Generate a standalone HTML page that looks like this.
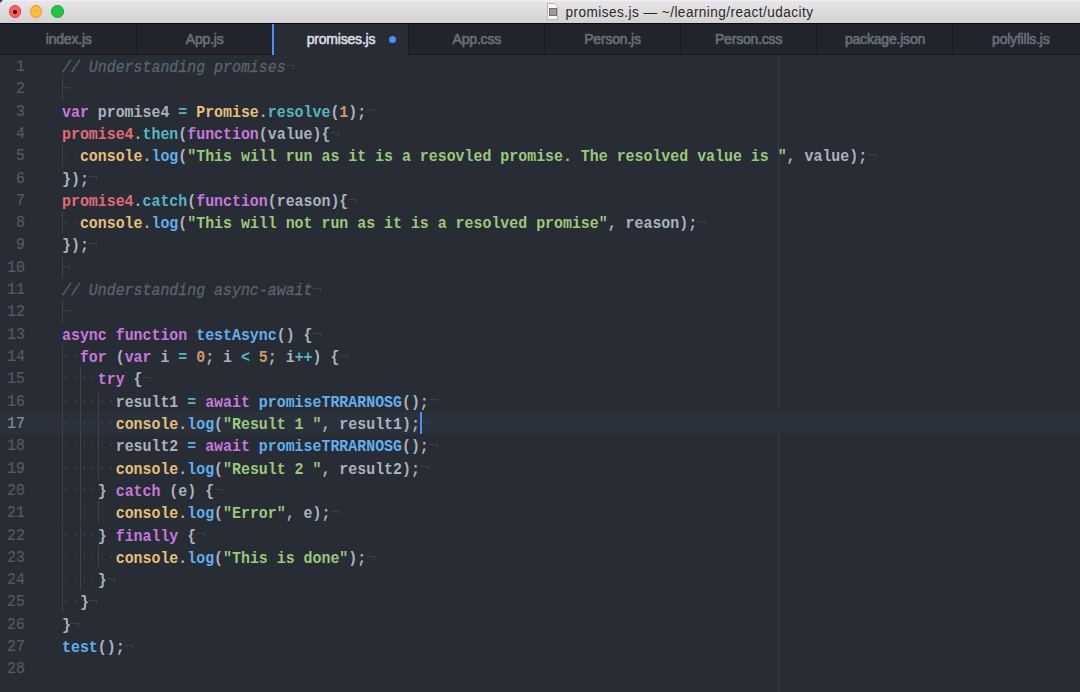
<!DOCTYPE html>
<html><head><meta charset="utf-8">
<style>
html,body{margin:0;padding:0;}
body{width:1080px;height:692px;overflow:hidden;background:#282c34;position:relative;font-family:"Liberation Sans",sans-serif;}
#title{position:absolute;left:0;top:0;width:1080px;height:23px;background:linear-gradient(#f3f1f3 0px,#e7e5e7 1.5px,#d3d1d3 23px);border-bottom:1px solid #0b0c0e;}
.tl{position:absolute;width:12.5px;height:12.5px;border-radius:50%;box-sizing:border-box;}
#ttext{position:absolute;left:565.6px;top:5.0px;font-size:13.6px;letter-spacing:0.45px;transform:scaleY(1.13);transform-origin:0 12px;color:#2a2a2a;white-space:nowrap;}
#tabs{position:absolute;left:0;top:24px;width:1080px;height:31px;background:#21252b;}
.sep{position:absolute;top:0;width:1px;height:30px;background:#181a1f;}
.tbot{position:absolute;top:30px;height:1px;background:#181a1f;}
.act{position:absolute;left:272px;top:0;width:136px;height:31px;background:#282c34;border-left:2px solid #528bff;box-sizing:border-box;}
.tt{position:absolute;top:7.0px;transform:translateX(-50%);font-size:14px;letter-spacing:-0.2px;line-height:16px;color:#686e7a;white-space:nowrap;-webkit-text-stroke:0.6px currentColor;}
.tt.a{color:#d7dae0;}
.ln{position:absolute;left:0;width:25px;text-align:right;font-family:"Liberation Mono",monospace;font-size:14.92px;line-height:22.31px;height:22.31px;color:#535965;transform:translateY(1.2px) scaleY(1.12);transform-origin:0 14px;-webkit-text-stroke:0.2px currentColor;white-space:pre;}
.code{position:absolute;font-family:"Liberation Mono",monospace;font-size:14.92px;line-height:22.31px;height:22.31px;color:#abb2bf;transform:translateY(1.6px) scaleY(1.12);transform-origin:0 14px;font-weight:bold;white-space:pre;}
.hl{position:absolute;left:0;width:1080px;height:22.31px;background:#2b313b;}
.ig{position:absolute;width:1px;height:22.31px;background:#3d424b;}
.dot{position:absolute;width:2px;height:2px;background:#373c45;}
.k{color:#c678dd} .v{color:#abb2bf} .o{color:#56b6c2} .y{color:#e5c07b} .c{color:#56b6c2} .b{color:#61afef} .n{color:#d19a66} .r{color:#e06c75} .s{color:#9cc87b} .cm{color:#5c6370;font-style:italic;font-weight:normal;-webkit-text-stroke:0.25px currentColor} .ln.cur{color:#858b96}
.eol{position:absolute;width:7px;height:3px;border-top:1.6px solid #3a3f48;border-right:1.6px solid #3a3f48;}
#cursor{position:absolute;left:420px;width:2px;background:#528bff;}
</style></head><body>
<div id="title">
<div style="position:absolute;left:0;top:0;width:0;height:0;border-top:3px solid #34404a;border-right:3px solid transparent"></div>
<div class="tl" style="left:8.7px;top:5.4px;background:#fc605c;border:1px solid #d8443f"><div style="position:absolute;left:3.2px;top:3.2px;width:4.6px;height:4.6px;border-radius:50%;background:#3c0403"></div></div>
<div class="tl" style="left:29.8px;top:5.4px;background:#fdbb40;border:1px solid #dd9e32"></div>
<div class="tl" style="left:51.0px;top:5.4px;background:#20c543;border:1px solid #17a834"></div>
<svg style="position:absolute;left:546px;top:3px" width="13" height="17" viewBox="0 0 13 17">
<path d="M1.5 0.5 H8.5 L11.5 3.5 V16.5 H1.5 Z" fill="#f7f7f7" stroke="#b5b5b5" stroke-width="1"/>
<rect x="3.5" y="5.5" width="7" height="7" fill="#9a9a9a" stroke="#6f6f6f" stroke-width="1"/>
</svg>
<div id="ttext">promises.js — ~/learning/react/udacity</div>
</div>
<div id="tabs">
<div class="sep" style="left:136px"></div>
<div class="sep" style="left:408px"></div>
<div class="sep" style="left:544px"></div>
<div class="sep" style="left:680px"></div>
<div class="sep" style="left:816px"></div>
<div class="sep" style="left:952px"></div>
<div class="tbot" style="left:0;width:272px"></div>
<div class="tbot" style="left:408px;width:672px"></div>
<div class="act"></div>
<div class="tt" style="left:68.7px">index.js</div>
<div class="tt" style="left:204.7px">App.js</div>
<div class="tt a" style="left:341px">promises.js</div>
<div style="position:absolute;left:389px;top:11.5px;width:7px;height:7px;border-radius:50%;background:#528bff"></div>
<div class="tt" style="left:476.8px">App.css</div>
<div class="tt" style="left:612.5px">Person.js</div>
<div class="tt" style="left:748.6px">Person.css</div>
<div class="tt" style="left:885px">package.json</div>
<div class="tt" style="left:1020.8px">polyfills.js</div>
</div>
<div style="position:absolute;left:778px;top:55px;width:1px;height:637px;background:#363b44"></div>
<div class="ln" style="top:55.00px">1</div>
<div class="code" style="top:55.00px;left:62.0px"><span class="cm">// Understanding promises</span></div>
<div class="eol" style="top:64.80px;left:286.2px"></div>
<div class="ig" style="top:77.31px;left:62.0px"></div>
<div class="ln" style="top:77.31px">2</div>
<div class="code" style="top:77.31px;left:62.0px"></div>
<div class="eol" style="top:87.11px;left:62.4px"></div>
<div class="ln" style="top:99.62px">3</div>
<div class="code" style="top:99.62px;left:62.0px"><span class="k">var</span><span class="v"> promise4 </span><span class="o">=</span><span class="v"> </span><span class="y">Promise</span><span class="v">.</span><span class="c">resolve</span><span class="v">(</span><span class="n">1</span><span class="v">);</span></div>
<div class="eol" style="top:109.42px;left:366.8px"></div>
<div class="ln" style="top:121.93px">4</div>
<div class="code" style="top:121.93px;left:62.0px"><span class="r">promise4</span><span class="v">.</span><span class="c">then</span><span class="v">(</span><span class="k">function</span><span class="v">(value){</span></div>
<div class="eol" style="top:131.73px;left:331.0px"></div>
<div class="ig" style="top:144.24px;left:62.0px"></div>
<div class="dot" style="top:154.24px;left:65.3px"></div>
<div class="dot" style="top:154.24px;left:74.3px"></div>
<div class="ln" style="top:144.24px">5</div>
<div class="code" style="top:144.24px;left:79.9px"><span class="y">console</span><span class="v">.</span><span class="b">log</span><span class="v">(</span><span class="s">&quot;This will run as it is a resovled promise. The resolved value is &quot;</span><span class="v">, value);</span></div>
<div class="eol" style="top:154.04px;left:868.3px"></div>
<div class="ln" style="top:166.55px">6</div>
<div class="code" style="top:166.55px;left:62.0px"><span class="v">});</span></div>
<div class="eol" style="top:176.35px;left:89.3px"></div>
<div class="ln" style="top:188.86px">7</div>
<div class="code" style="top:188.86px;left:62.0px"><span class="r">promise4</span><span class="v">.</span><span class="c">catch</span><span class="v">(</span><span class="k">function</span><span class="v">(reason){</span></div>
<div class="eol" style="top:198.66px;left:348.9px"></div>
<div class="ig" style="top:211.17px;left:62.0px"></div>
<div class="dot" style="top:221.17px;left:65.3px"></div>
<div class="dot" style="top:221.17px;left:74.3px"></div>
<div class="ln" style="top:211.17px">8</div>
<div class="code" style="top:211.17px;left:79.9px"><span class="y">console</span><span class="v">.</span><span class="b">log</span><span class="v">(</span><span class="s">&quot;This will not run as it is a resolved promise&quot;</span><span class="v">, reason);</span></div>
<div class="eol" style="top:220.97px;left:698.1px"></div>
<div class="ln" style="top:233.48px">9</div>
<div class="code" style="top:233.48px;left:62.0px"><span class="v">});</span></div>
<div class="eol" style="top:243.28px;left:89.3px"></div>
<div class="ig" style="top:255.79px;left:62.0px"></div>
<div class="ln" style="top:255.79px">10</div>
<div class="code" style="top:255.79px;left:62.0px"></div>
<div class="eol" style="top:265.59px;left:62.4px"></div>
<div class="ln" style="top:278.10px">11</div>
<div class="code" style="top:278.10px;left:62.0px"><span class="cm">// Understanding async-await</span></div>
<div class="eol" style="top:287.90px;left:313.1px"></div>
<div class="ig" style="top:300.41px;left:62.0px"></div>
<div class="ln" style="top:300.41px">12</div>
<div class="code" style="top:300.41px;left:62.0px"></div>
<div class="eol" style="top:310.21px;left:62.4px"></div>
<div class="ln" style="top:322.72px">13</div>
<div class="code" style="top:322.72px;left:62.0px"><span class="k">async</span><span class="v"> </span><span class="k">function</span><span class="v"> </span><span class="b">testAsync</span><span class="v">() {</span></div>
<div class="eol" style="top:332.52px;left:313.1px"></div>
<div class="ig" style="top:345.03px;left:62.0px"></div>
<div class="dot" style="top:355.03px;left:65.3px"></div>
<div class="dot" style="top:355.03px;left:74.3px"></div>
<div class="ln" style="top:345.03px">14</div>
<div class="code" style="top:345.03px;left:79.9px"><span class="k">for</span><span class="v"> (</span><span class="k">var</span><span class="v"> i </span><span class="o">=</span><span class="v"> </span><span class="n">0</span><span class="v">; i </span><span class="o">&lt;</span><span class="v"> </span><span class="n">5</span><span class="v">; i</span><span class="o">++</span><span class="v">) {</span></div>
<div class="eol" style="top:354.83px;left:340.0px"></div>
<div class="ig" style="top:367.34px;left:62.0px"></div>
<div class="ig" style="top:367.34px;left:79.9px"></div>
<div class="dot" style="top:377.34px;left:65.3px"></div>
<div class="dot" style="top:377.34px;left:74.3px"></div>
<div class="dot" style="top:377.34px;left:83.2px"></div>
<div class="dot" style="top:377.34px;left:92.2px"></div>
<div class="ln" style="top:367.34px">15</div>
<div class="code" style="top:367.34px;left:97.8px"><span class="k">try</span><span class="v"> {</span></div>
<div class="eol" style="top:377.14px;left:143.0px"></div>
<div class="ig" style="top:389.65px;left:62.0px"></div>
<div class="ig" style="top:389.65px;left:79.9px"></div>
<div class="ig" style="top:389.65px;left:97.8px"></div>
<div class="dot" style="top:399.65px;left:65.3px"></div>
<div class="dot" style="top:399.65px;left:74.3px"></div>
<div class="dot" style="top:399.65px;left:83.2px"></div>
<div class="dot" style="top:399.65px;left:92.2px"></div>
<div class="dot" style="top:399.65px;left:101.1px"></div>
<div class="dot" style="top:399.65px;left:110.1px"></div>
<div class="ln" style="top:389.65px">16</div>
<div class="code" style="top:389.65px;left:115.7px"><span class="v">result1 </span><span class="o">=</span><span class="v"> </span><span class="k">await</span><span class="v"> </span><span class="b">promiseTRRARNOSG</span><span class="v">();</span></div>
<div class="eol" style="top:399.45px;left:429.5px"></div>
<div class="hl" style="top:411.96px"></div>
<div class="ig" style="top:411.96px;left:62.0px"></div>
<div class="ig" style="top:411.96px;left:79.9px"></div>
<div class="ig" style="top:411.96px;left:97.8px"></div>
<div class="dot" style="top:421.96px;left:65.3px"></div>
<div class="dot" style="top:421.96px;left:74.3px"></div>
<div class="dot" style="top:421.96px;left:83.2px"></div>
<div class="dot" style="top:421.96px;left:92.2px"></div>
<div class="dot" style="top:421.96px;left:101.1px"></div>
<div class="dot" style="top:421.96px;left:110.1px"></div>
<div class="ln cur" style="top:411.96px">17</div>
<div class="code" style="top:411.96px;left:115.7px"><span class="y">console</span><span class="v">.</span><span class="b">log</span><span class="v">(</span><span class="s">&quot;Result 1 &quot;</span><span class="v">, result1);</span></div>
<div class="eol" style="top:421.76px;left:420.6px"></div>
<div class="ig" style="top:434.27px;left:62.0px"></div>
<div class="ig" style="top:434.27px;left:79.9px"></div>
<div class="ig" style="top:434.27px;left:97.8px"></div>
<div class="dot" style="top:444.27px;left:65.3px"></div>
<div class="dot" style="top:444.27px;left:74.3px"></div>
<div class="dot" style="top:444.27px;left:83.2px"></div>
<div class="dot" style="top:444.27px;left:92.2px"></div>
<div class="dot" style="top:444.27px;left:101.1px"></div>
<div class="dot" style="top:444.27px;left:110.1px"></div>
<div class="ln" style="top:434.27px">18</div>
<div class="code" style="top:434.27px;left:115.7px"><span class="v">result2 </span><span class="o">=</span><span class="v"> </span><span class="k">await</span><span class="v"> </span><span class="b">promiseTRRARNOSG</span><span class="v">();</span></div>
<div class="eol" style="top:444.07px;left:429.5px"></div>
<div class="ig" style="top:456.58px;left:62.0px"></div>
<div class="ig" style="top:456.58px;left:79.9px"></div>
<div class="ig" style="top:456.58px;left:97.8px"></div>
<div class="dot" style="top:466.58px;left:65.3px"></div>
<div class="dot" style="top:466.58px;left:74.3px"></div>
<div class="dot" style="top:466.58px;left:83.2px"></div>
<div class="dot" style="top:466.58px;left:92.2px"></div>
<div class="dot" style="top:466.58px;left:101.1px"></div>
<div class="dot" style="top:466.58px;left:110.1px"></div>
<div class="ln" style="top:456.58px">19</div>
<div class="code" style="top:456.58px;left:115.7px"><span class="y">console</span><span class="v">.</span><span class="b">log</span><span class="v">(</span><span class="s">&quot;Result 2 &quot;</span><span class="v">, result2);</span></div>
<div class="eol" style="top:466.38px;left:420.6px"></div>
<div class="ig" style="top:478.89px;left:62.0px"></div>
<div class="ig" style="top:478.89px;left:79.9px"></div>
<div class="dot" style="top:488.89px;left:65.3px"></div>
<div class="dot" style="top:488.89px;left:74.3px"></div>
<div class="dot" style="top:488.89px;left:83.2px"></div>
<div class="dot" style="top:488.89px;left:92.2px"></div>
<div class="ln" style="top:478.89px">20</div>
<div class="code" style="top:478.89px;left:97.8px"><span class="v">} </span><span class="k">catch</span><span class="v"> (e) {</span></div>
<div class="eol" style="top:488.69px;left:214.6px"></div>
<div class="ig" style="top:501.20px;left:62.0px"></div>
<div class="ig" style="top:501.20px;left:79.9px"></div>
<div class="ig" style="top:501.20px;left:97.8px"></div>
<div class="dot" style="top:511.20px;left:65.3px"></div>
<div class="dot" style="top:511.20px;left:74.3px"></div>
<div class="dot" style="top:511.20px;left:83.2px"></div>
<div class="dot" style="top:511.20px;left:92.2px"></div>
<div class="dot" style="top:511.20px;left:101.1px"></div>
<div class="dot" style="top:511.20px;left:110.1px"></div>
<div class="ln" style="top:501.20px">21</div>
<div class="code" style="top:501.20px;left:115.7px"><span class="y">console</span><span class="v">.</span><span class="b">log</span><span class="v">(</span><span class="s">&quot;Error&quot;</span><span class="v">, e);</span></div>
<div class="eol" style="top:511.00px;left:331.0px"></div>
<div class="ig" style="top:523.51px;left:62.0px"></div>
<div class="ig" style="top:523.51px;left:79.9px"></div>
<div class="dot" style="top:533.51px;left:65.3px"></div>
<div class="dot" style="top:533.51px;left:74.3px"></div>
<div class="dot" style="top:533.51px;left:83.2px"></div>
<div class="dot" style="top:533.51px;left:92.2px"></div>
<div class="ln" style="top:523.51px">22</div>
<div class="code" style="top:523.51px;left:97.8px"><span class="v">} </span><span class="k">finally</span><span class="v"> {</span></div>
<div class="eol" style="top:533.31px;left:196.7px"></div>
<div class="ig" style="top:545.82px;left:62.0px"></div>
<div class="ig" style="top:545.82px;left:79.9px"></div>
<div class="ig" style="top:545.82px;left:97.8px"></div>
<div class="dot" style="top:555.82px;left:65.3px"></div>
<div class="dot" style="top:555.82px;left:74.3px"></div>
<div class="dot" style="top:555.82px;left:83.2px"></div>
<div class="dot" style="top:555.82px;left:92.2px"></div>
<div class="dot" style="top:555.82px;left:101.1px"></div>
<div class="dot" style="top:555.82px;left:110.1px"></div>
<div class="ln" style="top:545.82px">23</div>
<div class="code" style="top:545.82px;left:115.7px"><span class="y">console</span><span class="v">.</span><span class="b">log</span><span class="v">(</span><span class="s">&quot;This is done&quot;</span><span class="v">);</span></div>
<div class="eol" style="top:555.62px;left:366.8px"></div>
<div class="ig" style="top:568.13px;left:62.0px"></div>
<div class="ig" style="top:568.13px;left:79.9px"></div>
<div class="dot" style="top:578.13px;left:65.3px"></div>
<div class="dot" style="top:578.13px;left:74.3px"></div>
<div class="dot" style="top:578.13px;left:83.2px"></div>
<div class="dot" style="top:578.13px;left:92.2px"></div>
<div class="ln" style="top:568.13px">24</div>
<div class="code" style="top:568.13px;left:97.8px"><span class="v">}</span></div>
<div class="eol" style="top:577.93px;left:107.2px"></div>
<div class="ig" style="top:590.44px;left:62.0px"></div>
<div class="dot" style="top:600.44px;left:65.3px"></div>
<div class="dot" style="top:600.44px;left:74.3px"></div>
<div class="ln" style="top:590.44px">25</div>
<div class="code" style="top:590.44px;left:79.9px"><span class="v">}</span></div>
<div class="eol" style="top:600.24px;left:89.3px"></div>
<div class="ln" style="top:612.75px">26</div>
<div class="code" style="top:612.75px;left:62.0px"><span class="v">}</span></div>
<div class="eol" style="top:622.55px;left:71.4px"></div>
<div class="ln" style="top:635.06px">27</div>
<div class="code" style="top:635.06px;left:62.0px"><span class="b">test</span><span class="v">();</span></div>
<div class="eol" style="top:644.86px;left:125.1px"></div>
<div class="ln" style="top:657.37px">28</div>
<div id="cursor" style="top:411.96px;height:22.31px"></div>
</body></html>
